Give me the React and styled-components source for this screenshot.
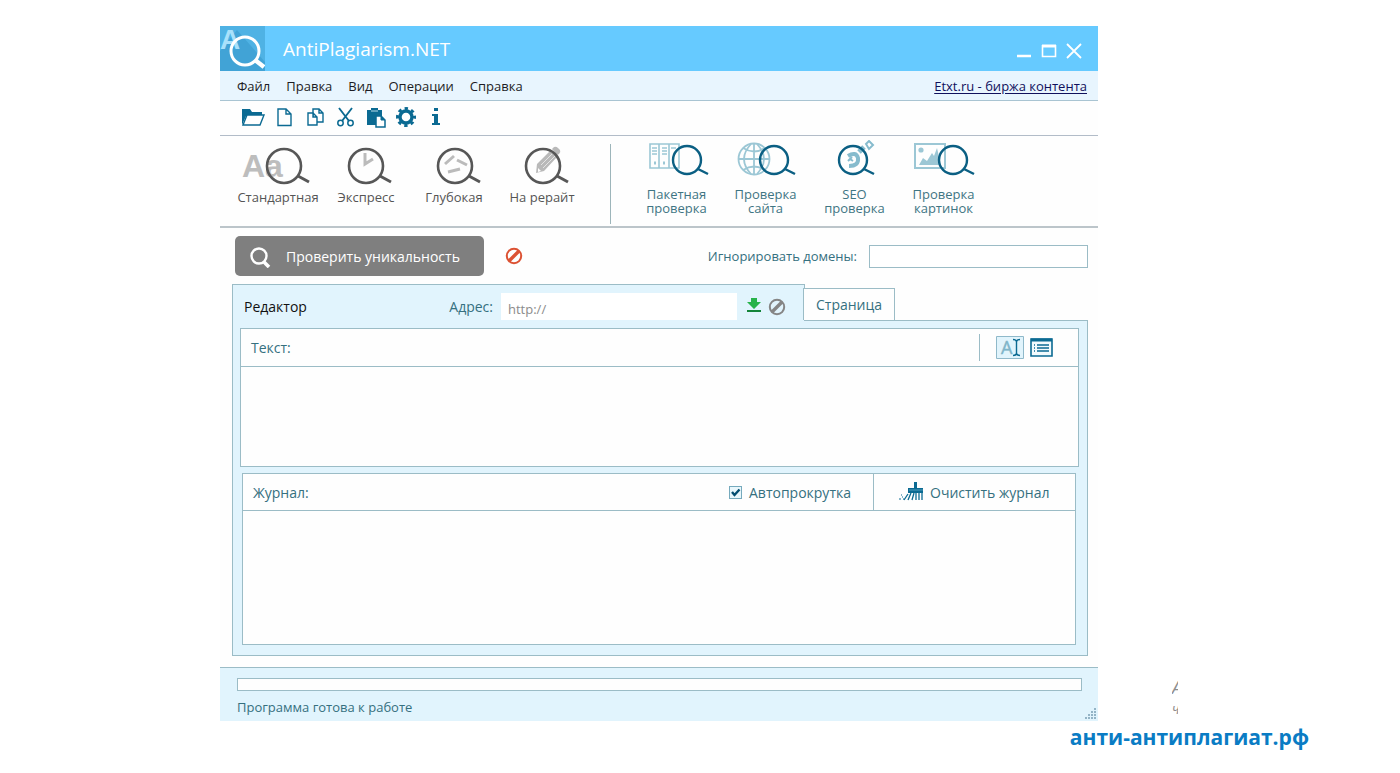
import React, { useState } from "react";
import styled, { createGlobalStyle } from "styled-components";

const GlobalStyle = createGlobalStyle`
  * {
    box-sizing: border-box;
  }

  body {
    margin: 0;
    background: #fff;
    font-family: "Open Sans", "Noto Sans", sans-serif;
    font-size: 14px;
    color: #35707f;
  }

  button, input, textarea {
    font: inherit;
    color: inherit;
  }

  button {
    border: 0;
    padding: 0;
    background: none;
    cursor: pointer;
  }

  svg {
    display: block;
  }
`;

const line = "#9bbcc6";
const pale = "#e1f4fd";

const Page = styled.div`
  padding-top: 26px;
`;

const Desk = styled.div`
  display: flex;
  align-items: flex-end;
  padding-left: 220px;
`;

const Window = styled.main`
  flex: 1;
  min-width: 0;
  background: #fefefe;
`;

const TitleBar = styled.header`
  display: flex;
  align-items: center;
  height: 45px;
  padding-right: 12px;
  background: #66caff;
  color: #fff;
`;

const Title = styled.h1`
  flex: 1;
  margin: 0 0 0 18px;
  font-size: 19px;
  line-height: 24px;
  font-weight: 400;
`;

const WindowButton = styled.button`
  display: flex;
  width: 25px;
  height: 24px;
  margin-top: 5px;
  align-items: center;
  justify-content: center;
`;

const MenuBar = styled.nav`
  display: flex;
  align-items: center;
  gap: 16px;
  height: 30px;
  padding: 0 11px 0 17px;
  background: #e8f5fe;
  border-bottom: 1px solid #a9c4d2;
  color: #1c1c24;
  font-size: 13px;
`;

const MenuLink = styled.a`
  margin-left: auto;
  color: #10105c;
  text-underline-offset: 2px;
`;

const ToolBar = styled.div`
  display: flex;
  align-items: center;
  height: 35px;
  padding: 0 0 2px 20px;
  border-bottom: 1px solid #b2bcc8;
`;

const ToolButton = styled.button`
  display: flex;
  width: 30px;
  height: 32px;
  align-items: center;
  justify-content: center;
`;

const Modes = styled.div`
  display: flex;
  height: 92px;
  padding: 4px 0 0 14px;
  border-bottom: 2px solid #bcc5ca;
`;

const ModeGroup = styled.div`
  display: flex;
  align-items: flex-start;
`;

const Mode = styled.button`
  width: ${(p) => (p.$blue ? 89 : 88)}px;
  color: ${(p) => (p.$blue ? "#3f7583" : "#555")};
  font-size: 13px;
  line-height: 14px;
  white-space: pre-line;
`;

const ModeIcon = styled.svg`
  width: 100%;
  height: ${(p) => (p.$blue ? 47 : 50)}px;
`;

const Divider = styled.div`
  width: 1px;
  height: 80px;
  margin: 4px 21px 0 24px;
  background: #9db5ba;
`;

const ActionRow = styled.div`
  display: flex;
  align-items: center;
  height: 56px;
  padding: 0 10px 0 15px;
`;

const CheckButton = styled.button`
  display: flex;
  align-items: center;
  gap: 14px;
  width: 249px;
  height: 40px;
  padding-left: 14px;
  border-radius: 5px;
  background: #7f7f7f;
  color: #fff;
`;

const IconButton = styled.button`
  display: flex;
  align-items: center;
  justify-content: center;
  width: ${(p) => p.$width || 23}px;
  height: 23px;
`;

const StopButton = styled(IconButton)`
  margin: 0 auto 0 18px;
`;

const DomainLabel = styled.label`
  margin-right: 12px;
  font-size: 13px;
`;

const DomainInput = styled.input`
  width: 219px;
  height: 23px;
  border: 1px solid ${line};
  background: #fff;
`;

const Tabs = styled.div`
  display: flex;
  align-items: flex-end;
  margin: 0 10px 0 12px;
`;

const EditorTab = styled.div`
  display: flex;
  align-items: center;
  width: 573px;
  height: 37px;
  margin-bottom: -1px;
  padding: 7px 16px 0 11px;
  border: 1px solid ${line};
  border-bottom: 0;
  background: ${pale};
  z-index: 1;
`;

const TabName = styled.button`
  color: #111;
`;

const AddressLabel = styled.label`
  margin: 0 8px 0 auto;
`;

const AddressInput = styled.input`
  width: 236px;
  height: 27px;
  margin-right: 5px;
  padding: 4px 7px 0;
  border: 0;
  background: #fff;
  font-size: 13px;

  &::placeholder {
    color: #8b8b8b;
  }
`;

const PageTab = styled.button`
  width: 92px;
  height: 32px;
  margin-left: -2px;
  border: 1px solid ${line};
  border-bottom: 0;
  background: #fefefe;
  z-index: 1;
`;

const TabBody = styled.section`
  margin: 0 10px 11px 12px;
  padding: 7px 8px 10px 7px;
  border: 1px solid ${line};
  background: ${pale};
`;

const Panel = styled.div`
  margin: ${(p) => p.$margin || 0};
  border: 1px solid ${line};
  background: #fefefe;
`;

const PanelHead = styled.div`
  display: flex;
  align-items: center;
  height: ${(p) => p.$height}px;
  padding-left: 10px;
  border-bottom: 1px solid ${line};
`;

const Area = styled.textarea`
  display: block;
  width: 100%;
  height: ${(p) => p.$height}px;
  padding: 8px 10px;
  border: 0;
  outline: 0;
  resize: none;
  background: transparent;
`;

const ViewButtons = styled.div`
  display: flex;
  align-items: center;
  gap: 6px;
  width: 99px;
  height: 27px;
  margin-left: auto;
  padding-left: 16px;
  border-left: 1px solid ${line};
`;

const ScrollLabel = styled.label`
  display: flex;
  align-items: center;
  gap: 7px;
  margin: 0 22px 0 auto;
`;

const CheckBox = styled.input`
  appearance: none;
  width: 13px;
  height: 13px;
  margin: 0;
  border: 1px solid #76aabd;
  background: #e9f7fc;

  &:checked {
    background: #e9f7fc
      url("data:image/svg+xml,%3Csvg xmlns='http://www.w3.org/2000/svg' viewBox='0 0 11 11'%3E%3Cpath d='M2 5l2.5 3L9.5 2.5' fill='none' stroke='%23034d70' stroke-width='2.4'/%3E%3C/svg%3E");
  }
`;

const ClearButton = styled.button`
  display: flex;
  align-items: center;
  gap: 6px;
  width: 202px;
  height: 36px;
  padding-left: 25px;
  border-left: 1px solid ${line};
`;

const StatusBar = styled.footer`
  position: relative;
  height: 54px;
  padding: 10px 16px 0 17px;
  border-top: 1px solid ${line};
  background: ${pale};
  font-size: 13px;
`;

const Progress = styled.div`
  height: 13px;
  margin-bottom: 7px;
  border: 1px solid ${line};
  background: #fefefe;
`;

const Grip = styled.svg`
  position: absolute;
  right: 1px;
  bottom: 1px;
`;

const Aside = styled.aside`
  width: 302px;
  height: 44px;
  padding-left: 74px;
  color: #8f8f8f;
`;

const Scrap = styled.div`
  width: 6px;
  height: 22px;
  overflow: hidden;
  font-size: ${(p) => p.$size}px;
  line-height: 20px;
  font-style: italic;
`;

const SiteName = styled.p`
  margin: 1px 91px 0 0;
  text-align: right;
  color: #0a7cc4;
  font-size: 21px;
  line-height: 30px;
  font-weight: 700;
`;

function Lens({ x, y, r, dark }) {
  return dark ? (
    <g stroke="#575757" fill="none">
      <circle cx={x} cy={y} r={r} strokeWidth="2.6" />
      <path d={`M${x + 14} ${y + 10}l11 6`} strokeWidth="3" />
    </g>
  ) : (
    <g stroke="#0b5f83" fill="none">
      <circle cx={x} cy={y} r={r} strokeWidth="2.4" />
      <path d={`M${x + 11} ${y + 9}l10 5`} strokeWidth="2.4" />
    </g>
  );
}

const modes = [
  {
    name: "Стандартная",
    x: 50,
    art: (
      <text x="8" y="37" fontSize="32" fontWeight="700" fill="#bdbdbd" fontFamily="Liberation Sans, sans-serif">
        Aa
      </text>
    ),
  },
  {
    name: "Экспресс",
    x: 44,
    art: <path d="M43 13v11l8-5" fill="none" stroke="#bbb" strokeWidth="3" />,
  },
  {
    name: "Глубокая",
    x: 45,
    art: <path d="M35 24l9-8M47 20l10 5M38 32l12-3" stroke="#bbb" strokeWidth="3" />,
  },
  {
    name: "На рерайт",
    x: 45,
    art: (
      <g fill="#b9b9b9">
        <path d="M38 33l1-9 13-13 7 6-13 14z" />
        <path d="M54 9l2-2q2-1 4 1l2 2q1 2-1 4l-2 1z" />
        <path d="M43 25L54 14M45 28l12-12" stroke="#e4e4e4" />
        <path d="M40 28l3 3-3 1z" fill="#fff" />
      </g>
    ),
  },
];

const checks = [
  {
    name: "Пакетная\nпроверка",
    x: 55,
    art: (
      <g fill="none" stroke="#9cc7d5" strokeWidth="1.6">
        <path d="M18 4h29v24H18zM27 4v24M37 4v24" />
        <path d="M20 8h5M20 11h5M30 8h5M30 11h5M39 8h5M20 14h5M30 14h5" />
        <path d="M22 23h2M31 23h2" strokeWidth="3" />
      </g>
    ),
  },
  {
    name: "Проверка\nсайта",
    x: 53,
    art: (
      <g fill="none" stroke="#9cc7d5" strokeWidth="1.8">
        <circle cx="33" cy="19" r="15.5" />
        <path d="M33 3v32M17 19h32M22 8q11 7 22 0M22 30q11-7 22 0M30 4q-14 15 0 30M36 4q14 15 0 30" />
      </g>
    ),
  },
  {
    name: "SEO\nпроверка",
    x: 43,
    art: (
      <g fill="none" stroke="#86bbcd">
        <path d="M38 16q8-5 10 2q1 8-9 8" strokeWidth="4" />
        <path d="M42 17l-4 4M40 19l3 2" strokeWidth="2" />
        <path d="M49 12l5-5" strokeWidth="5" />
        <path d="M56 4l3-3 4 4-4 4z" strokeWidth="2" />
      </g>
    ),
  },
  {
    name: "Проверка\nкартинок",
    x: 54,
    art: (
      <g fill="#9cc7d5">
        <path d="M16 4h30v24H16z" fill="none" stroke="#9cc7d5" strokeWidth="2" />
        <circle cx="22" cy="10" r="2.6" />
        <path d="M20 25l4-7 4 3 5-8 2 3 3-8 4 17z" />
      </g>
    ),
  },
];

const blue = "#0b6a92";

const tools = [
  {
    name: "Открыть",
    art: (
      <>
        <path d="M2 20V4h8l2 3h10v4H6z" fill={blue} />
        <path d="M3 20l4-10h17l-4 10z" fill="#fff" stroke={blue} strokeWidth="1.4" />
      </>
    ),
  },
  {
    name: "Новый",
    art: <path d="M8 4h8l5 5v11.500H8zM16 4v5h5" fill="none" stroke={blue} strokeWidth="1.4" />,
  },
  {
    name: "Копировать",
    art: (
      <g fill="#fff" stroke={blue} strokeWidth="1.4">
        <path d="M13 4h6l4 4v9H13zM19 4v4h4" />
        <path d="M8 8h5l4 4v8H8zM13 8v4h4" />
      </g>
    ),
  },
  {
    name: "Вырезать",
    art: (
      <g fill="none" stroke={blue}>
        <path d="M9 3l10 13M22 3L12 16" strokeWidth="1.9" />
        <circle cx="10.500" cy="18" r="2.700" strokeWidth="1.5" />
        <circle cx="20.500" cy="18" r="2.700" strokeWidth="1.5" />
      </g>
    ),
  },
  {
    name: "Вставить",
    art: (
      <>
        <path d="M7 5h4V3h7v2h4v15H7z" fill={blue} />
        <path d="M11 6h7" stroke="#b9dbe8" />
        <path d="M16 11h5l4 4v7h-9z" fill="#fff" stroke={blue} strokeWidth="1.5" />
        <path d="M21 11v4h4" fill={blue} stroke={blue} />
      </>
    ),
  },
  {
    name: "Настройки",
    art: (
      <g stroke={blue} fill="none">
        <circle cx="16" cy="12" r="6" strokeWidth="3.4" />
        <circle cx="16" cy="12" r="8.500" strokeWidth="3" strokeDasharray="3.34 3.34" strokeDashoffset="1.67" />
      </g>
    ),
  },
  {
    name: "Информация",
    art: <path d="M14 3h4v3h-4zM12 9h6v9h2v2h-8v-2h2v-7h-2z" fill={blue} />,
  },
];

const menu = ["Файл", "Правка", "Вид", "Операции", "Справка"];

function BanIcon({ color }) {
  return (
    <svg width="18" height="18" viewBox="0 0 18 18" fill="none" stroke={color}>
      <circle cx="9" cy="9" r="7.2" strokeWidth="2" />
      <path d="M4 14L14 4" strokeWidth="3.4" />
    </svg>
  );
}

export default function App() {
  const [autoScroll, setAutoScroll] = useState(true);

  return (
    <Page>
      <GlobalStyle />
      <Desk>
        <Window>
          <TitleBar>
            <svg width="45" height="45" viewBox="0 0 45 45">
              <path d="M0 0h45v45H0z" fill="#4fb2e4" />
              <path d="M0 25L17 4l28 32v9H0z" fill="#41a3d6" />
              <text x="0" y="23" fontSize="28" fontWeight="700" fill="#a9e1fb" fontFamily="Liberation Sans, sans-serif">
                A
              </text>
              <g fill="none" stroke="#fff">
                <circle cx="25" cy="25" r="14" strokeWidth="3" />
                <path d="M35 34l9 7" strokeWidth="4.5" />
              </g>
            </svg>
            <Title>AntiPlagiarism.NET</Title>
            <WindowButton aria-label="Свернуть">
              <svg width="16" height="16">
                <path d="M1 13h14" stroke="#fff" strokeWidth="2.500" />
              </svg>
            </WindowButton>
            <WindowButton aria-label="Развернуть">
              <svg width="16" height="16" fill="none" stroke="#fff">
                <path d="M1.5 2v11.500h13V2" strokeWidth="1.6" />
                <path d="M1 3h14" strokeWidth="3" />
              </svg>
            </WindowButton>
            <WindowButton aria-label="Закрыть">
              <svg width="16" height="16">
                <path d="M1 1l14 14M15 1L1 15" stroke="#fff" strokeWidth="1.800" />
              </svg>
            </WindowButton>
          </TitleBar>

          <MenuBar>
            {menu.map((item) => (
              <button key={item}>{item}</button>
            ))}
            <MenuLink href="#etxt">Etxt.ru - биржа контента</MenuLink>
          </MenuBar>

          <ToolBar>
            {tools.map((tool) => (
              <ToolButton key={tool.name} aria-label={tool.name}>
                <svg width="28" height="24" viewBox="1 0 28 24">
                  {tool.art}
                </svg>
              </ToolButton>
            ))}
          </ToolBar>

          <Modes>
            <ModeGroup>
              {modes.map((mode) => (
                <Mode key={mode.name}>
                  <ModeIcon viewBox="0 0 88 50">
                    {mode.art}
                    <Lens x={mode.x} y={26} r={17} dark />
                  </ModeIcon>
                  {mode.name}
                </Mode>
              ))}
            </ModeGroup>
            <Divider />
            <ModeGroup>
              {checks.map((check) => (
                <Mode key={check.name} $blue>
                  <ModeIcon viewBox="0 0 89 47" $blue>
                    {check.art}
                    <Lens x={check.x} y={20} r={14} />
                  </ModeIcon>
                  {check.name}
                </Mode>
              ))}
            </ModeGroup>
          </Modes>

          <ActionRow>
            <CheckButton>
              <svg width="23" height="23" fill="none" stroke="#fff">
                <circle cx="10" cy="11" r="7.5" strokeWidth="2.4" />
                <path d="M15 17l5 5" strokeWidth="3.6" />
              </svg>
              Проверить уникальность
            </CheckButton>
            <StopButton aria-label="Остановить">
              <BanIcon color="#dc5233" />
            </StopButton>
            <DomainLabel htmlFor="domains">Игнорировать домены:</DomainLabel>
            <DomainInput id="domains" />
          </ActionRow>

          <Tabs>
            <EditorTab>
              <TabName>Редактор</TabName>
              <AddressLabel htmlFor="address">Адрес:</AddressLabel>
              <AddressInput id="address" placeholder="http://" />
              <IconButton aria-label="Загрузить">
                <svg width="16" height="20">
                  <path d="M5 1h6v4h4l-7 7-7-7h4z" fill="#28b34b" />
                  <path d="M1 14h14" stroke="#14853a" strokeWidth="2" />
                </svg>
              </IconButton>
              <IconButton aria-label="Отменить">
                <BanIcon color="#858585" />
              </IconButton>
            </EditorTab>
            <PageTab>Страница</PageTab>
          </Tabs>

          <TabBody>
            <Panel>
              <PanelHead $height={38}>
                <label htmlFor="text">Текст:</label>
                <ViewButtons>
                  <IconButton aria-label="Редактирование" $width={28}>
                    <svg width="28" height="23">
                      <path d="M.5 .5h27v22H.5z" fill="#e1f4fc" stroke="#8fb9ca" />
                      <text x="5" y="18" fontSize="18" fill="#7fb5c9" stroke="#7fb5c9" strokeWidth=".4">
                        A
                      </text>
                      <path d="M17 3.5q3 0 3.500 2q.5-2 3.500-2M17 19.500q3 0 3.500-2q.5 2 3.500 2M20.500 5v13" fill="none" stroke={blue} strokeWidth="1.4" />
                    </svg>
                  </IconButton>
                  <IconButton aria-label="Список">
                    <svg width="23" height="19">
                      <path d="M1 1h21v17H1z" fill="#f2fafd" stroke={blue} strokeWidth="1.6" />
                      <path d="M1 2h21" stroke={blue} strokeWidth="3" />
                      <path d="M7 7h12M7 10h12M7 13h12M4 7h1M4 10h1M4 13h1" stroke={blue} strokeWidth="1.3" />
                    </svg>
                  </IconButton>
                </ViewButtons>
              </PanelHead>
              <Area id="text" $height={99} />
            </Panel>

            <Panel $margin="6px 3px 0 2px">
              <PanelHead $height={37}>
                <label htmlFor="journal">Журнал:</label>
                <ScrollLabel>
                  <CheckBox
                    type="checkbox"
                    checked={autoScroll}
                    onChange={(e) => setAutoScroll(e.target.checked)}
                  />
                  Автопрокрутка
                </ScrollLabel>
                <ClearButton>
                  <svg width="25" height="20" viewBox="0 0 25 20">
                    <path d="M15 0h3v6h6v5H9V6h6z" fill={blue} />
                    <path d="M10 8h14" stroke="#4f9cbb" />
                    <path d="M9 12l-4 6M12 11l-3 7M15 11l-2 7M17 11v7M20 11v7M23 11v7" stroke={blue} strokeWidth="1.3" />
                    <path d="M0 17h2M3 15h1M2 13h1M4 17h1" stroke={blue} />
                  </svg>
                  Очистить журнал
                </ClearButton>
              </PanelHead>
              <Area id="journal" $height={133} readOnly />
            </Panel>
          </TabBody>

          <StatusBar>
            <Progress role="progressbar" aria-label="Ход проверки" />
            Программа готова к работе
            <Grip width="13" height="13" fill="#94b4c6">
              {[0, 1, 2, 3].map((row) =>
                Array.from({ length: row + 1 }, (_, i) => (
                  <rect key={`${row}-${i}`} x={10 - i * 3} y={1 + row * 3} width="2" height="2" />
                ))
              )}
            </Grip>
          </StatusBar>
        </Window>
        <Aside>
          <Scrap $size={18}>А</Scrap>
          <Scrap $size={14}>ч</Scrap>
        </Aside>
      </Desk>
      <SiteName>анти-антиплагиат.рф</SiteName>
    </Page>
  );
}
